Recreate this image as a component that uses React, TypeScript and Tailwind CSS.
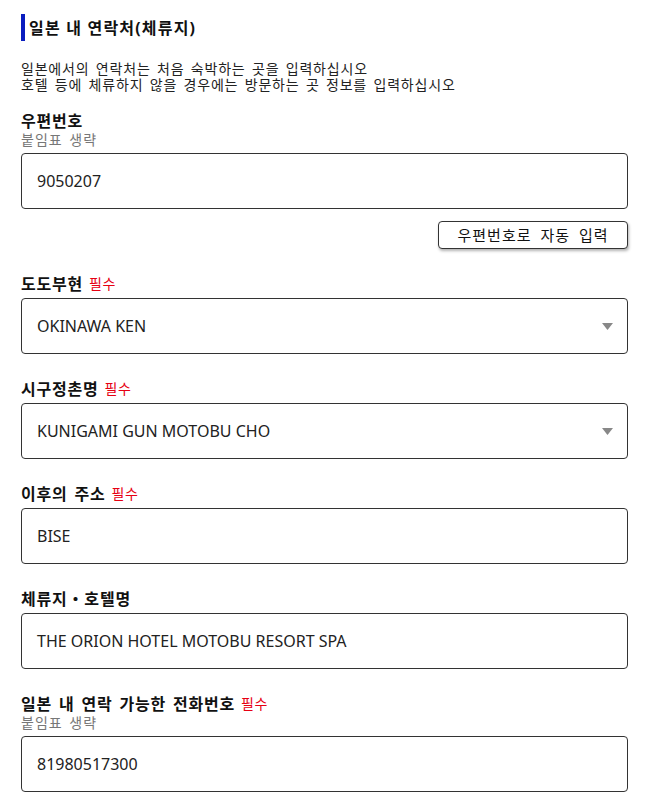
const font = "font-['Noto_Sans','Noto_Sans_CJK_KR',sans-serif]";

type Field = {
  label: string;
  required?: boolean;
  hint?: string;
  value: string;
  select?: boolean;
};

const fields: Field[] = [
  { label: "도도부현", required: true, value: "OKINAWA KEN", select: true },
  { label: "시구정촌명", required: true, value: "KUNIGAMI GUN MOTOBU CHO", select: true },
  { label: "이후의 주소", required: true, value: "BISE" },
  { label: "체류지・호텔명", value: "THE ORION HOTEL MOTOBU RESORT SPA" },
  { label: "일본 내 연락 가능한 전화번호", required: true, hint: "붙임표 생략", value: "81980517300" },
];

function Label({ field }: { field: Field }) {
  return (
    <div>
      <div className="flex h-[20px] items-center gap-[6px] leading-[20px]">
        <span className="text-[16px] font-bold tracking-[0.8px] [word-spacing:2px] text-[#111]">{field.label}</span>
        {field.required && <span className="text-[14px] tracking-[0.5px] text-[#e60012]">필수</span>}
      </div>
      {field.hint && (
        <p className="h-[18px] text-[14px] leading-[17px] tracking-[1px] [word-spacing:2px] text-[#777]">{field.hint}</p>
      )}
    </div>
  );
}

function Box({ field }: { field: Field }) {
  return (
    <div className="mt-[4px] flex h-[56px] items-center justify-between rounded-[4px] border border-[#333] bg-white pl-[15px] pr-[14px]">
      <span className="text-[16px] text-[#222]">{field.value}</span>
      {field.select && (
        <svg width="11" height="7" viewBox="0 0 11 7">
          <path d="M0 0h11L5.5 7z" fill="#888" />
        </svg>
      )}
    </div>
  );
}

export default function App() {
  return (
    <div className={`${font} min-h-[805px] bg-white pl-[21px] pr-[18px] pt-[14px] text-[#222]`}>
      {/* 제목 */}
      <div className="flex h-[27px] items-center border-l-4 border-[#0a1dbf] pl-[4px]">
        <h2 className="text-[16px] font-bold tracking-[1.2px] text-[#111]">일본 내 연락처(체류지)</h2>
      </div>

      <div className="mt-[20px] text-[14px] leading-[16px] tracking-[0.8px] [word-spacing:2px]">
        <p>일본에서의 연락처는 처음 숙박하는 곳을 입력하십시오</p>
        <p>호텔 등에 체류하지 않을 경우에는 방문하는 곳 정보를 입력하십시오</p>
      </div>

      {/* 우편번호 */}
      <div className="mt-[18px]">
        <Label field={{ label: "우편번호", hint: "붙임표 생략", value: "" }} />
        <Box field={{ label: "", value: "9050207" }} />
        <div className="mt-[12px] flex justify-end">
          <button className="h-[28px] w-[190px] rounded-[4px] border border-[#333] bg-white text-[15px] tracking-[1px] [word-spacing:4px] text-[#111] shadow-[1px_2px_3px_rgba(0,0,0,0.3)]">
            우편번호로 자동 입력
          </button>
        </div>
      </div>

      {fields.map((field) => (
        <div key={field.label} className="mt-[25px]">
          <Label field={field} />
          <Box field={field} />
        </div>
      ))}
    </div>
  );
}
